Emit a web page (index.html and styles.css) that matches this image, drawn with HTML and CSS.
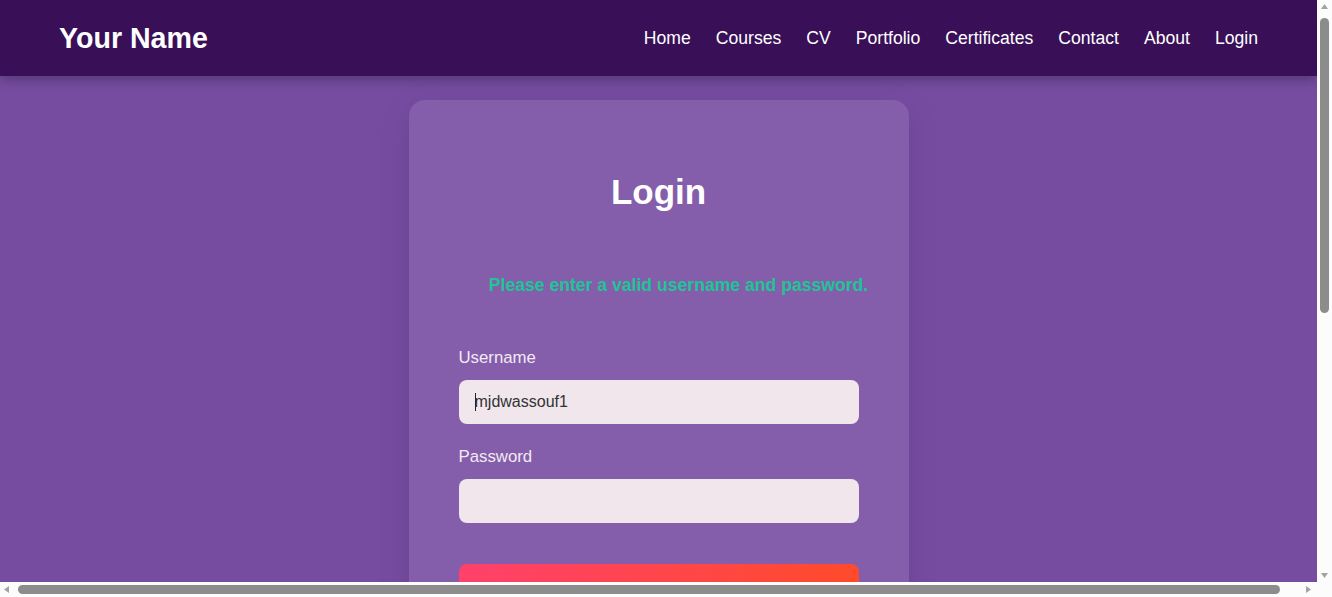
FILE: index.html
```html
<!DOCTYPE html>
<html lang="en">
<head>
<meta charset="utf-8">
<title>Login</title>
<link rel="stylesheet" href="styles.css">
</head>
<body>
<div class="page">
  <header class="site-header">
    <a class="brand" href="#">Your Name</a>
    <nav class="nav">
      <a href="#">Home</a>
      <a href="#">Courses</a>
      <a href="#">CV</a>
      <a href="#">Portfolio</a>
      <a href="#">Certificates</a>
      <a href="#">Contact</a>
      <a href="#">About</a>
      <a href="#">Login</a>
    </nav>
  </header>
  <main class="main">
    <section class="card">
      <h2 class="card-title">Login</h2>
      <ul class="messages">
        <li>Please enter a valid username and password.</li>
      </ul>
      <form class="form">
        <div class="field">
          <label class="label" for="username">Username</label>
          <div class="input-wrap">
            <input class="input" id="username" type="text" value="mjdwassouf1" autofocus>
            <span class="caret"></span>
          </div>
        </div>
        <div class="field">
          <label class="label" for="password">Password</label>
          <input class="input" id="password" type="password">
        </div>
        <button class="btn" type="submit">Login</button>
      </form>
      <p class="alt">Don't have an account? <a href="#">Register</a></p>
    </section>
  </main>
  <footer class="site-footer">
    <p>&copy; 2024 Your Name. All rights reserved.</p>
  </footer>
</div>

<div class="vscroll">
  <svg class="arrow arrow-up" width="9" height="7" viewBox="0 0 9 7"><polygon points="4.5,1 8,6 1,6" fill="#a3a3a3"/></svg>
  <div class="vthumb"></div>
  <svg class="arrow arrow-down" width="9" height="7" viewBox="0 0 9 7"><polygon points="1,1 8,1 4.5,6" fill="#a3a3a3"/></svg>
</div>
<div class="hscroll">
  <svg class="arrow arrow-left" width="7" height="9" viewBox="0 0 7 9"><polygon points="1,4.5 6,1 6,8" fill="#a3a3a3"/></svg>
  <div class="hthumb"></div>
  <svg class="arrow arrow-right" width="7" height="9" viewBox="0 0 7 9"><polygon points="1,1 6,4.5 1,8" fill="#a3a3a3"/></svg>
</div>
<div class="scroll-corner"></div>
</body>
</html>
```
FILE: styles.css
```css
* { box-sizing: border-box; }
html, body { margin: 0; padding: 0; }
body {
  font-family: "Liberation Sans", Arial, sans-serif;
  background: #764ca1;
  color: #fff;
}
.page {
  width: calc(100vw - 15px);
}
.site-header {
  height: 76px;
  padding: 0 59px;
  background: #391058;
  display: flex;
  align-items: center;
  justify-content: space-between;
  box-shadow: 0 3px 12px rgba(0, 0, 0, 0.3);
  position: relative;
  z-index: 1;
}
.brand {
  color: #fff;
  text-decoration: none;
  font-weight: 700;
  font-size: 28.6px;
}
.nav {
  display: flex;
  gap: 25px;
}
.nav a {
  color: #fff;
  text-decoration: none;
  font-size: 17.6px;
}
.main {
  min-height: 900px;
  padding: 24px 0;
  display: flex;
  flex-direction: column;
  align-items: center;
}
.card {
  width: 500px;
  padding: 50px;
  background: rgba(255, 255, 255, 0.1);
  border-radius: 16px;
  box-shadow: 0 8px 32px rgba(0, 0, 0, 0.1);
}
.card-title {
  margin: 21px 0 0;
  font-size: 35px;
  line-height: 42px;
  font-weight: 700;
  text-align: center;
}
.messages {
  margin: 61px -50px 51px;
  padding: 0 0 0 40px;
  list-style: none;
  text-align: center;
  color: #20c497;
  font-weight: 700;
  font-size: 17.6px;
  line-height: 22px;
}
.form {
  display: flex;
  flex-direction: column;
}
.field {
  display: flex;
  flex-direction: column;
  margin-bottom: 22px;
}
.field + .field { margin-bottom: 41px; }
.label {
  font-size: 16.8px;
  line-height: 20px;
  padding-top: 1px;
  color: #f3e9f3;
  margin-bottom: 12px;
}
.input-wrap {
  position: relative;
  display: flex;
  flex-direction: column;
}
.input {
  height: 44px;
  border: none;
  border-radius: 8px;
  background: #f0e6ec;
  padding: 0 16px;
  font-family: "Liberation Sans", Arial, sans-serif;
  font-size: 16px;
  color: #333;
}
.input:focus { outline: none; }
.caret {
  position: absolute;
  left: 16px;
  top: 13px;
  width: 1px;
  height: 18px;
  background: #222;
}
.btn {
  height: 51px;
  border: none;
  border-radius: 8px;
  background: linear-gradient(90deg, #ff416c, #ff4b2b);
  color: #fff;
  font-family: "Liberation Sans", Arial, sans-serif;
  font-weight: 700;
  font-size: 18px;
  cursor: pointer;
}
.alt {
  margin: 24px 0 0;
  text-align: center;
  font-size: 16px;
  color: #f3e9f3;
}
.alt a { color: #fff; font-weight: 700; }
.site-footer {
  background: #391058;
  padding: 36px 0;
  text-align: center;
  font-size: 16px;
}
.site-footer p { margin: 0; }

/* simulated browser scrollbars */
.vscroll {
  position: fixed;
  top: 0;
  right: 0;
  width: 15px;
  height: calc(100vh - 15px);
  background: #fcfcfc;
  z-index: 10;
}
.hscroll {
  position: fixed;
  left: 0;
  bottom: 0;
  width: calc(100vw - 15px);
  height: 15px;
  background: #fcfcfc;
  z-index: 10;
}
.scroll-corner {
  position: fixed;
  right: 0;
  bottom: 0;
  width: 15px;
  height: 15px;
  background: #fcfcfc;
  z-index: 10;
}
.arrow { position: absolute; display: block; }
.arrow-up { top: 3px; left: 3px; }
.arrow-down { bottom: 3px; left: 3px; }
.arrow-left { left: 3px; top: 3px; }
.arrow-right { right: 5px; top: 3px; }
.vthumb {
  position: absolute;
  top: 18px;
  left: 3px;
  width: 9px;
  height: 295px;
  border-radius: 5px;
  background: #8c8c8c;
}
.hthumb {
  position: absolute;
  left: 18px;
  top: 3px;
  height: 9px;
  width: 1262px;
  border-radius: 5px;
  background: #8c8c8c;
}
```
